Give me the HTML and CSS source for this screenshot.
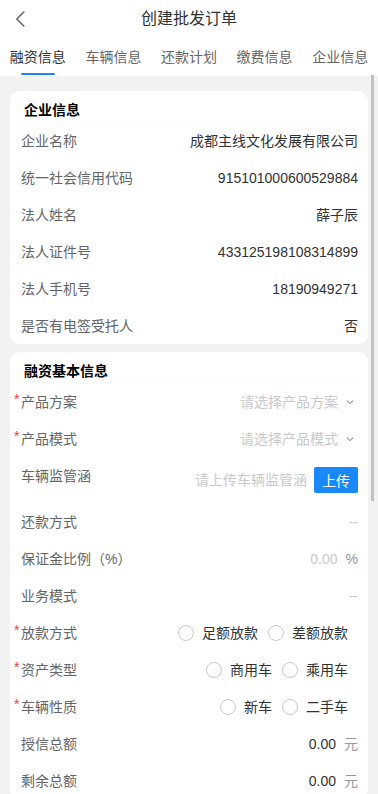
FILE: index.html
```html
<!DOCTYPE html>
<html>
<head>
    <meta charset="utf-8">
    <title>创建批发订单</title>
    <link rel="stylesheet" href="styles.css">
</head>
<body>
    <header class="nav-bar">
        <span class="nav-back">
            <svg width="10" height="16" viewBox="0 0 10 16"><path d="M8.8 1 L1.8 8 L8.8 15" fill="none" stroke="#646566" stroke-width="1.6" stroke-linecap="round" stroke-linejoin="round"/></svg>
        </span>
        <h1 class="nav-title">创建批发订单</h1>
        <span class="nav-side"></span>
    </header>

    <nav class="tabs">
        <div class="tab active">融资信息</div>
        <div class="tab">车辆信息</div>
        <div class="tab">还款计划</div>
        <div class="tab">缴费信息</div>
        <div class="tab">企业信息</div>
    </nav>

    <main class="content">
        <section class="card">
            <h2 class="card-title">企业信息</h2>
            <div class="row"><span class="label">企业名称</span><span class="value">成都主线文化发展有限公司</span></div>
            <div class="row"><span class="label">统一社会信用代码</span><span class="value">915101000600529884</span></div>
            <div class="row"><span class="label">法人姓名</span><span class="value">薛子辰</span></div>
            <div class="row"><span class="label">法人证件号</span><span class="value">433125198108314899</span></div>
            <div class="row"><span class="label">法人手机号</span><span class="value">18190949271</span></div>
            <div class="row"><span class="label">是否有电签受托人</span><span class="value">否</span></div>
        </section>

        <section class="card">
            <h2 class="card-title">融资基本信息</h2>
            <div class="row">
                <span class="label req">产品方案</span>
                <span class="picker">
                    <span class="placeholder">请选择产品方案</span>
                    <svg class="arrow" width="12" height="12" viewBox="0 0 12 12"><path d="M2.8 4.6 L6 7.6 L9.2 4.6" fill="none" stroke="#969799" stroke-width="1.1"/></svg>
                </span>
            </div>
            <div class="row">
                <span class="label req">产品模式</span>
                <span class="picker">
                    <span class="placeholder">请选择产品模式</span>
                    <svg class="arrow" width="12" height="12" viewBox="0 0 12 12"><path d="M2.8 4.6 L6 7.6 L9.2 4.6" fill="none" stroke="#969799" stroke-width="1.1"/></svg>
                </span>
            </div>
            <div class="row row-upload">
                <span class="label">车辆监管涵</span>
                <span class="picker">
                    <span class="placeholder">请上传车辆监管涵</span>
                    <button class="upload-btn">上传</button>
                </span>
            </div>
            <div class="row"><span class="label">还款方式</span><span class="placeholder">--</span></div>
            <div class="row"><span class="label">保证金比例（%）</span><span class="picker"><span class="placeholder">0.00</span><span class="unit">%</span></span></div>
            <div class="row"><span class="label">业务模式</span><span class="placeholder">--</span></div>
            <div class="row">
                <span class="label req">放款方式</span>
                <span class="radio-group">
                    <span class="radio"><i class="radio-icon"></i>足额放款</span>
                    <span class="radio"><i class="radio-icon"></i>差额放款</span>
                </span>
            </div>
            <div class="row">
                <span class="label req">资产类型</span>
                <span class="radio-group">
                    <span class="radio"><i class="radio-icon"></i>商用车</span>
                    <span class="radio"><i class="radio-icon"></i>乘用车</span>
                </span>
            </div>
            <div class="row">
                <span class="label req">车辆性质</span>
                <span class="radio-group">
                    <span class="radio"><i class="radio-icon"></i>新车</span>
                    <span class="radio"><i class="radio-icon"></i>二手车</span>
                </span>
            </div>
            <div class="row"><span class="label">授信总额</span><span class="picker"><span class="value">0.00</span><span class="unit">元</span></span></div>
            <div class="row"><span class="label">剩余总额</span><span class="picker"><span class="value">0.00</span><span class="unit">元</span></span></div>
        </section>
    </main>

    <div class="scroll-thumb"></div>
</body>
</html>
```

FILE: styles.css
```css
body {
    margin: 0;
    background-color: #f2f2f2;
    font-family: "Liberation Sans", "Noto Sans CJK SC", sans-serif;
    font-size: 14px;
    color: #323233;
}
.nav-bar {
    display: flex;
    align-items: center;
    height: 38px;
    background-color: #fff;
}
.nav-back, .nav-side {
    width: 60px;
    display: flex;
    align-items: center;
    padding-left: 15px;
    box-sizing: border-box;
}
.nav-title {
    flex: 1;
    margin: 0;
    text-align: center;
    font-size: 16px;
    font-weight: normal;
    line-height: 38px;
    color: #323233;
}
.tabs {
    display: flex;
    height: 38px;
    background-color: #fff;
}
.tab {
    flex: 1;
    text-align: center;
    line-height: 38px;
    color: #646566;
    position: relative;
}
.tab.active {
    color: #323233;
}
.tab.active::after {
    content: '';
    position: absolute;
    left: 50%;
    bottom: 1px;
    width: 34px;
    height: 2px;
    margin-left: -17px;
    border-radius: 2px;
    background-color: #1989fa;
}
.content {
    padding: 15px 10px 0;
}
.card {
    background-color: #fff;
    border-radius: 10px;
    padding: 0 10px 0 11px;
    margin-bottom: 8px;
}
.card-title {
    margin: 0;
    padding: 10px 0 2px 3px;
    font-size: 14px;
    line-height: 18px;
    font-weight: bold;
    color: #000;
    border-bottom: 1px solid #fafafa;
}
.row {
    display: flex;
    justify-content: space-between;
    align-items: center;
    height: 37px;
    line-height: 20px;
}
.row-upload {
    height: 46px;
    align-items: flex-start;
    padding: 10px 0;
    box-sizing: border-box;
}
.row-upload .label {
    line-height: 18px;
}
.row-upload .picker {
    align-self: center;
}
.label {
    color: #646566;
}
.req::before {
    content: '*';
    display: inline-block;
    width: 7px;
    margin-left: -7px;
    color: #f03c3c;
    vertical-align: 3px;
    line-height: 14px;
}
.value {
    color: #323233;
}
.placeholder {
    color: #c8c9cc;
}
.picker {
    display: flex;
    align-items: center;
}
.arrow {
    margin: 0 2px 0 6px;
}
.unit {
    margin-left: 8px;
    color: #969799;
}
.upload-btn {
    margin-left: 7px;
    height: 26px;
    padding: 0 8px;
    border: none;
    border-radius: 2px;
    background-color: #1989fa;
    color: #fff;
    font-family: inherit;
    font-size: 14px;
}
.radio-group {
    display: flex;
}
.radio {
    display: flex;
    align-items: center;
    margin-right: 10px;
    color: #323233;
}
.radio-icon {
    width: 16px;
    height: 16px;
    border: 1px solid #c8c9cc;
    border-radius: 50%;
    box-sizing: border-box;
    margin-right: 8px;
}
.scroll-thumb {
    position: fixed;
    top: 75px;
    right: 4px;
    width: 3px;
    height: 426px;
    background-color: #c1c1c1;
}
```
